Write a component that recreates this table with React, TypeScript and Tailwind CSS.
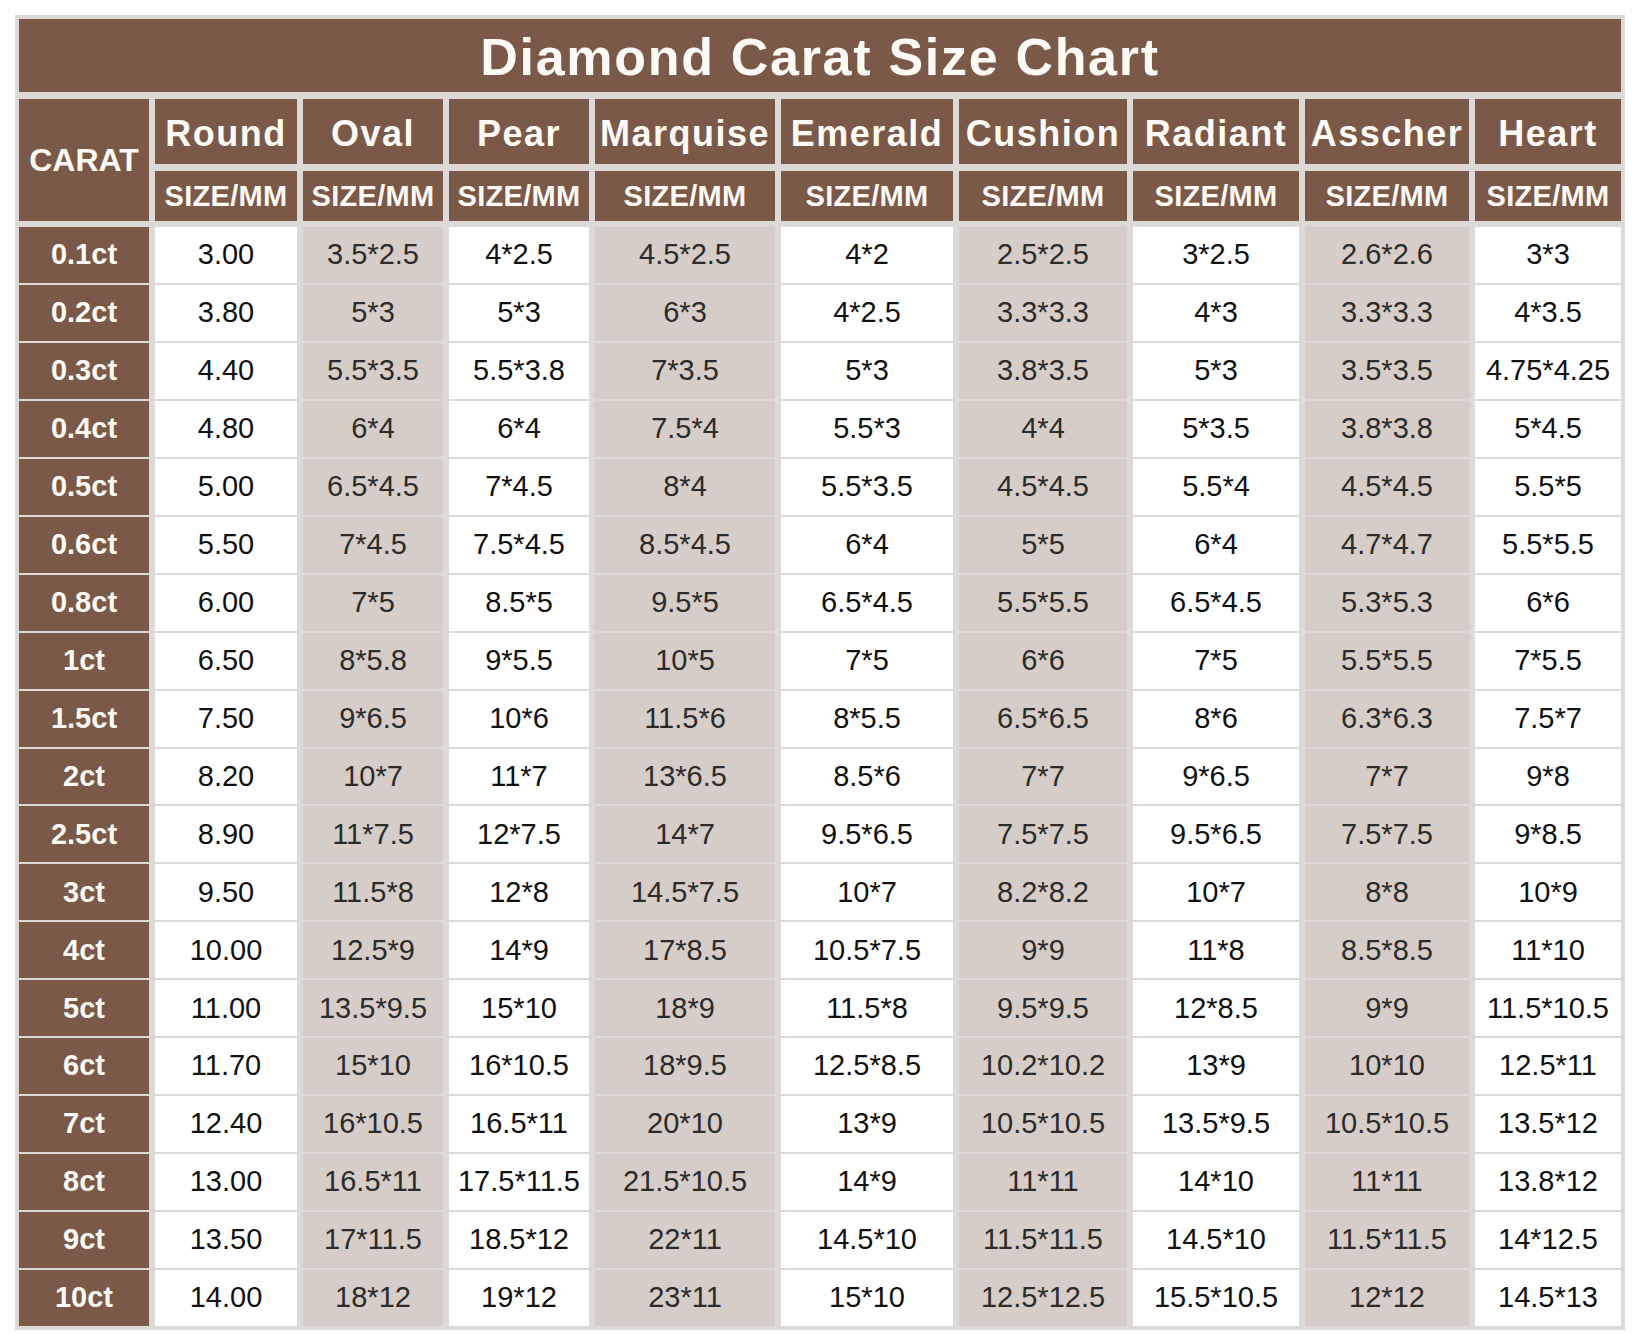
import React from "react";

const carats = ["0.1ct","0.2ct","0.3ct","0.4ct","0.5ct","0.6ct","0.8ct","1ct","1.5ct","2ct","2.5ct","3ct","4ct","5ct","6ct","7ct","8ct","9ct","10ct"];

const shapes = ["Round","Oval","Pear","Marquise","Emerald","Cushion","Radiant","Asscher","Heart"];

const data: string[][] = [
  ["3.00","3.80","4.40","4.80","5.00","5.50","6.00","6.50","7.50","8.20","8.90","9.50","10.00","11.00","11.70","12.40","13.00","13.50","14.00"],
  ["3.5*2.5","5*3","5.5*3.5","6*4","6.5*4.5","7*4.5","7*5","8*5.8","9*6.5","10*7","11*7.5","11.5*8","12.5*9","13.5*9.5","15*10","16*10.5","16.5*11","17*11.5","18*12"],
  ["4*2.5","5*3","5.5*3.8","6*4","7*4.5","7.5*4.5","8.5*5","9*5.5","10*6","11*7","12*7.5","12*8","14*9","15*10","16*10.5","16.5*11","17.5*11.5","18.5*12","19*12"],
  ["4.5*2.5","6*3","7*3.5","7.5*4","8*4","8.5*4.5","9.5*5","10*5","11.5*6","13*6.5","14*7","14.5*7.5","17*8.5","18*9","18*9.5","20*10","21.5*10.5","22*11","23*11"],
  ["4*2","4*2.5","5*3","5.5*3","5.5*3.5","6*4","6.5*4.5","7*5","8*5.5","8.5*6","9.5*6.5","10*7","10.5*7.5","11.5*8","12.5*8.5","13*9","14*9","14.5*10","15*10"],
  ["2.5*2.5","3.3*3.3","3.8*3.5","4*4","4.5*4.5","5*5","5.5*5.5","6*6","6.5*6.5","7*7","7.5*7.5","8.2*8.2","9*9","9.5*9.5","10.2*10.2","10.5*10.5","11*11","11.5*11.5","12.5*12.5"],
  ["3*2.5","4*3","5*3","5*3.5","5.5*4","6*4","6.5*4.5","7*5","8*6","9*6.5","9.5*6.5","10*7","11*8","12*8.5","13*9","13.5*9.5","14*10","14.5*10","15.5*10.5"],
  ["2.6*2.6","3.3*3.3","3.5*3.5","3.8*3.8","4.5*4.5","4.7*4.7","5.3*5.3","5.5*5.5","6.3*6.3","7*7","7.5*7.5","8*8","8.5*8.5","9*9","10*10","10.5*10.5","11*11","11.5*11.5","12*12"],
  ["3*3","4*3.5","4.75*4.25","5*4.5","5.5*5","5.5*5.5","6*6","7*5.5","7.5*7","9*8","9*8.5","10*9","11*10","11.5*10.5","12.5*11","13.5*12","13.8*12","14*12.5","14.5*13"],
];

const cols = "grid grid-cols-[130px_142px_140px_140px_180px_172px_168px_166px_164px_146px] gap-x-[6px]";

export default function App() {
  return (
    <div className="w-[1640px] h-[1342px] bg-white pt-[15px] pl-[15px] font-['Liberation_Sans',Arial,sans-serif]">
      <div className="w-[1610px] h-[1315px] bg-[#dcd9d7] p-[4px] flex flex-col">
        <div className="h-[73px] bg-[#7a5948] flex items-center justify-center text-[#fdf9f4] text-[52px] font-bold tracking-[1.7px] pt-[2px]">
          Diamond Carat Size Chart
        </div>
        <div className={`${cols} grid-rows-[65px_50px] gap-y-[7px] mt-[7px]`}>
          <div className="row-span-2 bg-[#7a5948] flex items-center justify-center text-[#fdf9f4] text-[32px] font-bold">
            CARAT
          </div>
          {shapes.map((s) => (
            <div key={s} className="bg-[#7a5948] flex items-center justify-center text-[#fdf9f4] text-[36px] font-bold tracking-[1.5px] pt-[4px] whitespace-nowrap">
              {s}
            </div>
          ))}
          {shapes.map((s) => (
            <div key={s + "-mm"} className="bg-[#7a5948] flex items-center justify-center text-[#fdf9f4] text-[29px] font-bold tracking-[0.3px] pt-[2px] whitespace-nowrap">
              SIZE/MM
            </div>
          ))}
        </div>
        <div className={`${cols} grid-rows-[repeat(19,1fr)] gap-y-[2px] mt-[6px] h-[1100px]`}>
          {carats.map((c, r) => (
            <React.Fragment key={c}>
              <div className="bg-[#7a5948] flex items-center justify-center text-[#fdf9f4] text-[29px] font-bold">
                {c}
              </div>
              {data.map((col, i) =>
                i % 2 === 1 ? (
                  <div key={i} className="bg-[#d6cdc8] flex items-center justify-center text-[#2b2b2b] text-[29px] whitespace-nowrap">
                    {col[r]}
                  </div>
                ) : (
                  <div key={i} className="bg-white flex items-center justify-center text-[#111111] text-[29px] whitespace-nowrap">
                    {col[r]}
                  </div>
                )
              )}
            </React.Fragment>
          ))}
        </div>
      </div>
    </div>
  );
}
